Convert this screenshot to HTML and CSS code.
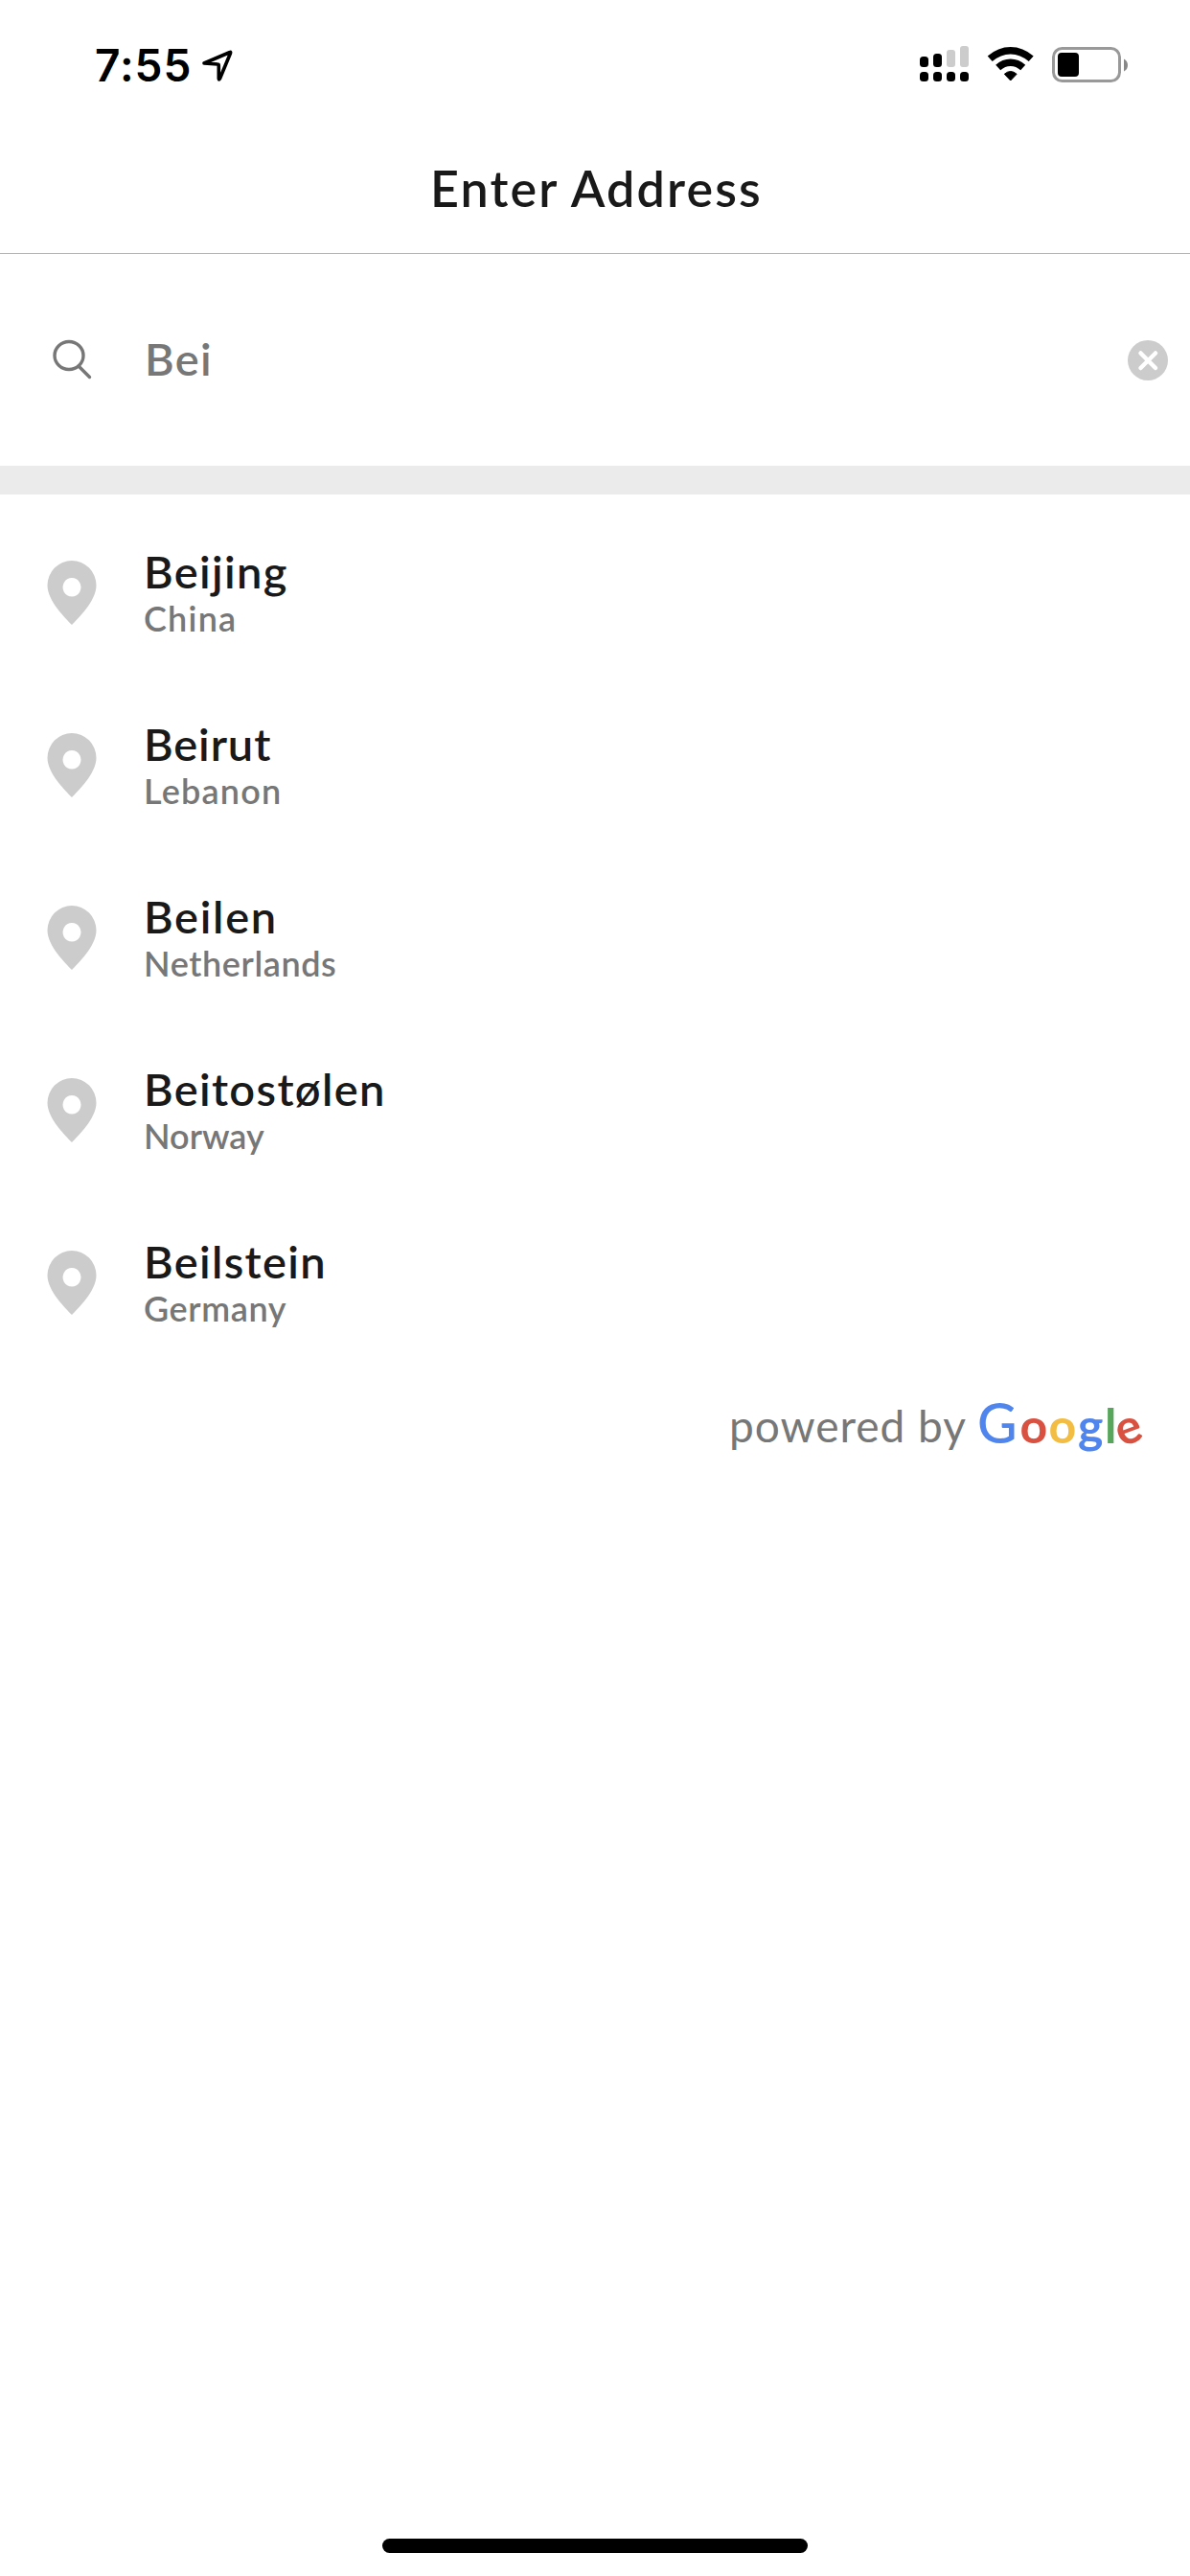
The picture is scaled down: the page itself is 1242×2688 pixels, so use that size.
FILE: index.html
```
<!DOCTYPE html>
<html lang="en"><head><meta charset="utf-8"><title>Enter Address</title><link rel="stylesheet" href="styles.css"></head>
<body>
<header class="status">
  <div class="clock"><span class="time">7:55</span>
    <svg class="location" width="34" height="34" viewBox="0 0 34 34"><path d="M3 15 30 3.500 Q31 3 30.500 4.500L19.500 31 Q18.500 33 18.300 31V17.500Q18.300 16 17 16Z" fill="none" stroke="#000" stroke-width="3.600" stroke-linejoin="round"/></svg></div>
  <div class="indicators">
    <svg width="51" height="38" viewBox="0 0 51 38"><g fill="#000"><rect y="11" width="9" height="11" rx="3.500"/><rect x="14" y="8" width="9" height="14" rx="3.500"/><rect y="27" width="9" height="10" rx="3.500"/><rect x="14" y="27" width="9" height="10" rx="3.500"/><rect x="28" y="27" width="9" height="10" rx="3.500"/><rect x="42" y="27" width="9" height="10" rx="3.500"/></g><g fill="#ccc"><rect x="28" y="4" width="9" height="18" rx="3"/><rect x="42" y="0" width="9" height="22" rx="3"/></g></svg>
    <svg class="wifi" width="50" height="37" viewBox="0 0 50 37"><g fill="none" stroke="#000" stroke-width="7.500"><path d="M3.200 13.300Q13 4.700 24.700 4.700T46.200 13.300"/><path d="M11.700 22.500Q17.500 17.300 24.700 17.300T37.700 22.500"/></g><path d="M18.300 29.300Q24.700 23.700 31.100 29.300L24.700 36Z" stroke="#000" stroke-width="1" stroke-linejoin="round"/></svg>
    <svg class="battery" width="80" height="38" viewBox="0 0 80 38"><rect x="1.500" y="1.500" width="69" height="34" rx="9" fill="none" stroke="#999" stroke-width="3"/><rect x="6" y="6" width="22" height="25" rx="4"/><path d="M75 12.500Q79 14.500 79 19T75 25.500Z" fill="#888"/></svg>
  </div>
</header>
<div class="titlebar"><h1 class="title">Enter Address</h1></div>
<div class="search">
  <svg class="glass" width="42" height="43" viewBox="0 0 42 43"><g fill="none" stroke="#777" stroke-width="3.400" stroke-linecap="round"><ellipse cx="17" cy="17" rx="15" ry="14.500"/><path d="M27 28 38.500 39.500"/></g></svg>
  <span class="query">Bei</span>
  <svg class="clear" width="42" height="42" viewBox="0 0 42 42"><circle cx="21" cy="21" r="21" fill="#ccc"/><path d="M13.500 13.500 29 29M29 13.500 13.500 29" stroke="#fff" stroke-width="4.500" stroke-linecap="round"/></svg>
</div>
<ul class="results">
  <li class="result"><svg class="pin" width="52" height="67" viewBox="0 0 52 67"><path d="M26 67C20 61 .500 42 .500 26A25.500 26 0 0 1 51.500 26C51.500 42 32 61 26 67ZM26 18a9.500 9.800 0 1 0 .01 0Z" fill="#ccc" fill-rule="evenodd"/></svg><div><div class="city">Beijing</div><div class="country">China</div></div></li>
  <li class="result"><svg class="pin" width="52" height="67" viewBox="0 0 52 67"><path d="M26 67C20 61 .500 42 .500 26A25.500 26 0 0 1 51.500 26C51.500 42 32 61 26 67ZM26 18a9.500 9.800 0 1 0 .01 0Z" fill="#ccc" fill-rule="evenodd"/></svg><div><div class="city city-snug">Beirut</div><div class="country">Lebanon</div></div></li>
  <li class="result"><svg class="pin" width="52" height="67" viewBox="0 0 52 67"><path d="M26 67C20 61 .500 42 .500 26A25.500 26 0 0 1 51.500 26C51.500 42 32 61 26 67ZM26 18a9.500 9.800 0 1 0 .01 0Z" fill="#ccc" fill-rule="evenodd"/></svg><div><div class="city city-wide">Beilen</div><div class="country country-snug">Netherlands</div></div></li>
  <li class="result"><svg class="pin" width="52" height="67" viewBox="0 0 52 67"><path d="M26 67C20 61 .500 42 .500 26A25.500 26 0 0 1 51.500 26C51.500 42 32 61 26 67ZM26 18a9.500 9.800 0 1 0 .01 0Z" fill="#ccc" fill-rule="evenodd"/></svg><div><div class="city">Beitostølen</div><div class="country country-tight">Norway</div></div></li>
  <li class="result"><svg class="pin" width="52" height="67" viewBox="0 0 52 67"><path d="M26 67C20 61 .500 42 .500 26A25.500 26 0 0 1 51.500 26C51.500 42 32 61 26 67ZM26 18a9.500 9.800 0 1 0 .01 0Z" fill="#ccc" fill-rule="evenodd"/></svg><div><div class="city">Beilstein</div><div class="country country-snug">Germany</div></div></li>
</ul>
<div class="credit"><span class="powered">powered by</span>
  <svg class="google" width="190" height="84" viewBox="0 0 190 84" role="img" aria-label="Google"><text y="57"><tspan class="cap" x="0" fill="#5085ed">G</tspan><tspan x="44.500" fill="#d95140">o</tspan><tspan x="74.500" fill="#f2bd42">o</tspan><tspan x="105" fill="#5085ed">g</tspan><tspan x="133" fill="#58a55c">l</tspan></text><text x="145" y="57" fill="#d95140" transform="rotate(-20 159 44)">e</text></svg>
</div>
<div class="home"></div>
</body></html>
```
FILE: styles.css
```
*{box-sizing:border-box}
body{margin:0;height:2688px;background:#fff;color:#191919;font-family:Lato,"Open Sans",sans-serif;font-weight:600;display:flex;flex-direction:column}
svg{display:block;flex:none}
.status{height:132px;display:flex;justify-content:space-between;padding:0 64px 0 99px;color:#000}
.clock{display:flex;padding-top:40px}
.time{width:111px;font:600 46px/56px Inter,sans-serif;letter-spacing:1px}
.location{margin-top:11px}
.indicators{display:flex;padding-top:48px}
.wifi{margin-left:19px}
.battery{margin:1px 0 0 18px}
.titlebar{height:133px;border-bottom:1px solid #b3b3b3;display:flex;justify-content:center}
.title{margin:34px 0 0 3px;font-size:52px;line-height:60px;font-weight:600;letter-spacing:2.15px}
.search{height:221px;display:flex;padding:0 23px 0 55px}
.glass{margin-top:89px}
.query{flex:1;margin:79px 0 0 54px;font-size:47px;line-height:60px;letter-spacing:1.3px;color:#777}
.clear{margin-top:90px}
.results{list-style:none;margin:0;padding:12px 0 0;border-top:30px solid #ebebeb}
.result{height:180px;display:flex;padding:41px 0 0 49px;gap:49px}
.pin{margin-top:16px}
.city{font-size:47px;line-height:55px;letter-spacing:1.35px}
.city-snug{letter-spacing:.9px}
.city-wide{letter-spacing:1.7px}
.country{font-size:36px;line-height:43px;letter-spacing:1.2px;color:#777}
.country-snug{letter-spacing:.6px}
.country-tight{letter-spacing:0}
.credit{display:flex;justify-content:flex-end;padding:21px 32px 0 0}
.powered{margin:9px 11px 0 0;font-size:46px;line-height:60px;font-weight:400;letter-spacing:1px;color:#777}
.google{font-size:50px;font-weight:700}
.cap{font-size:57px;font-weight:500}
.home{width:444px;height:15px;border-radius:8px;background:#000;margin:auto auto 24px}
```
